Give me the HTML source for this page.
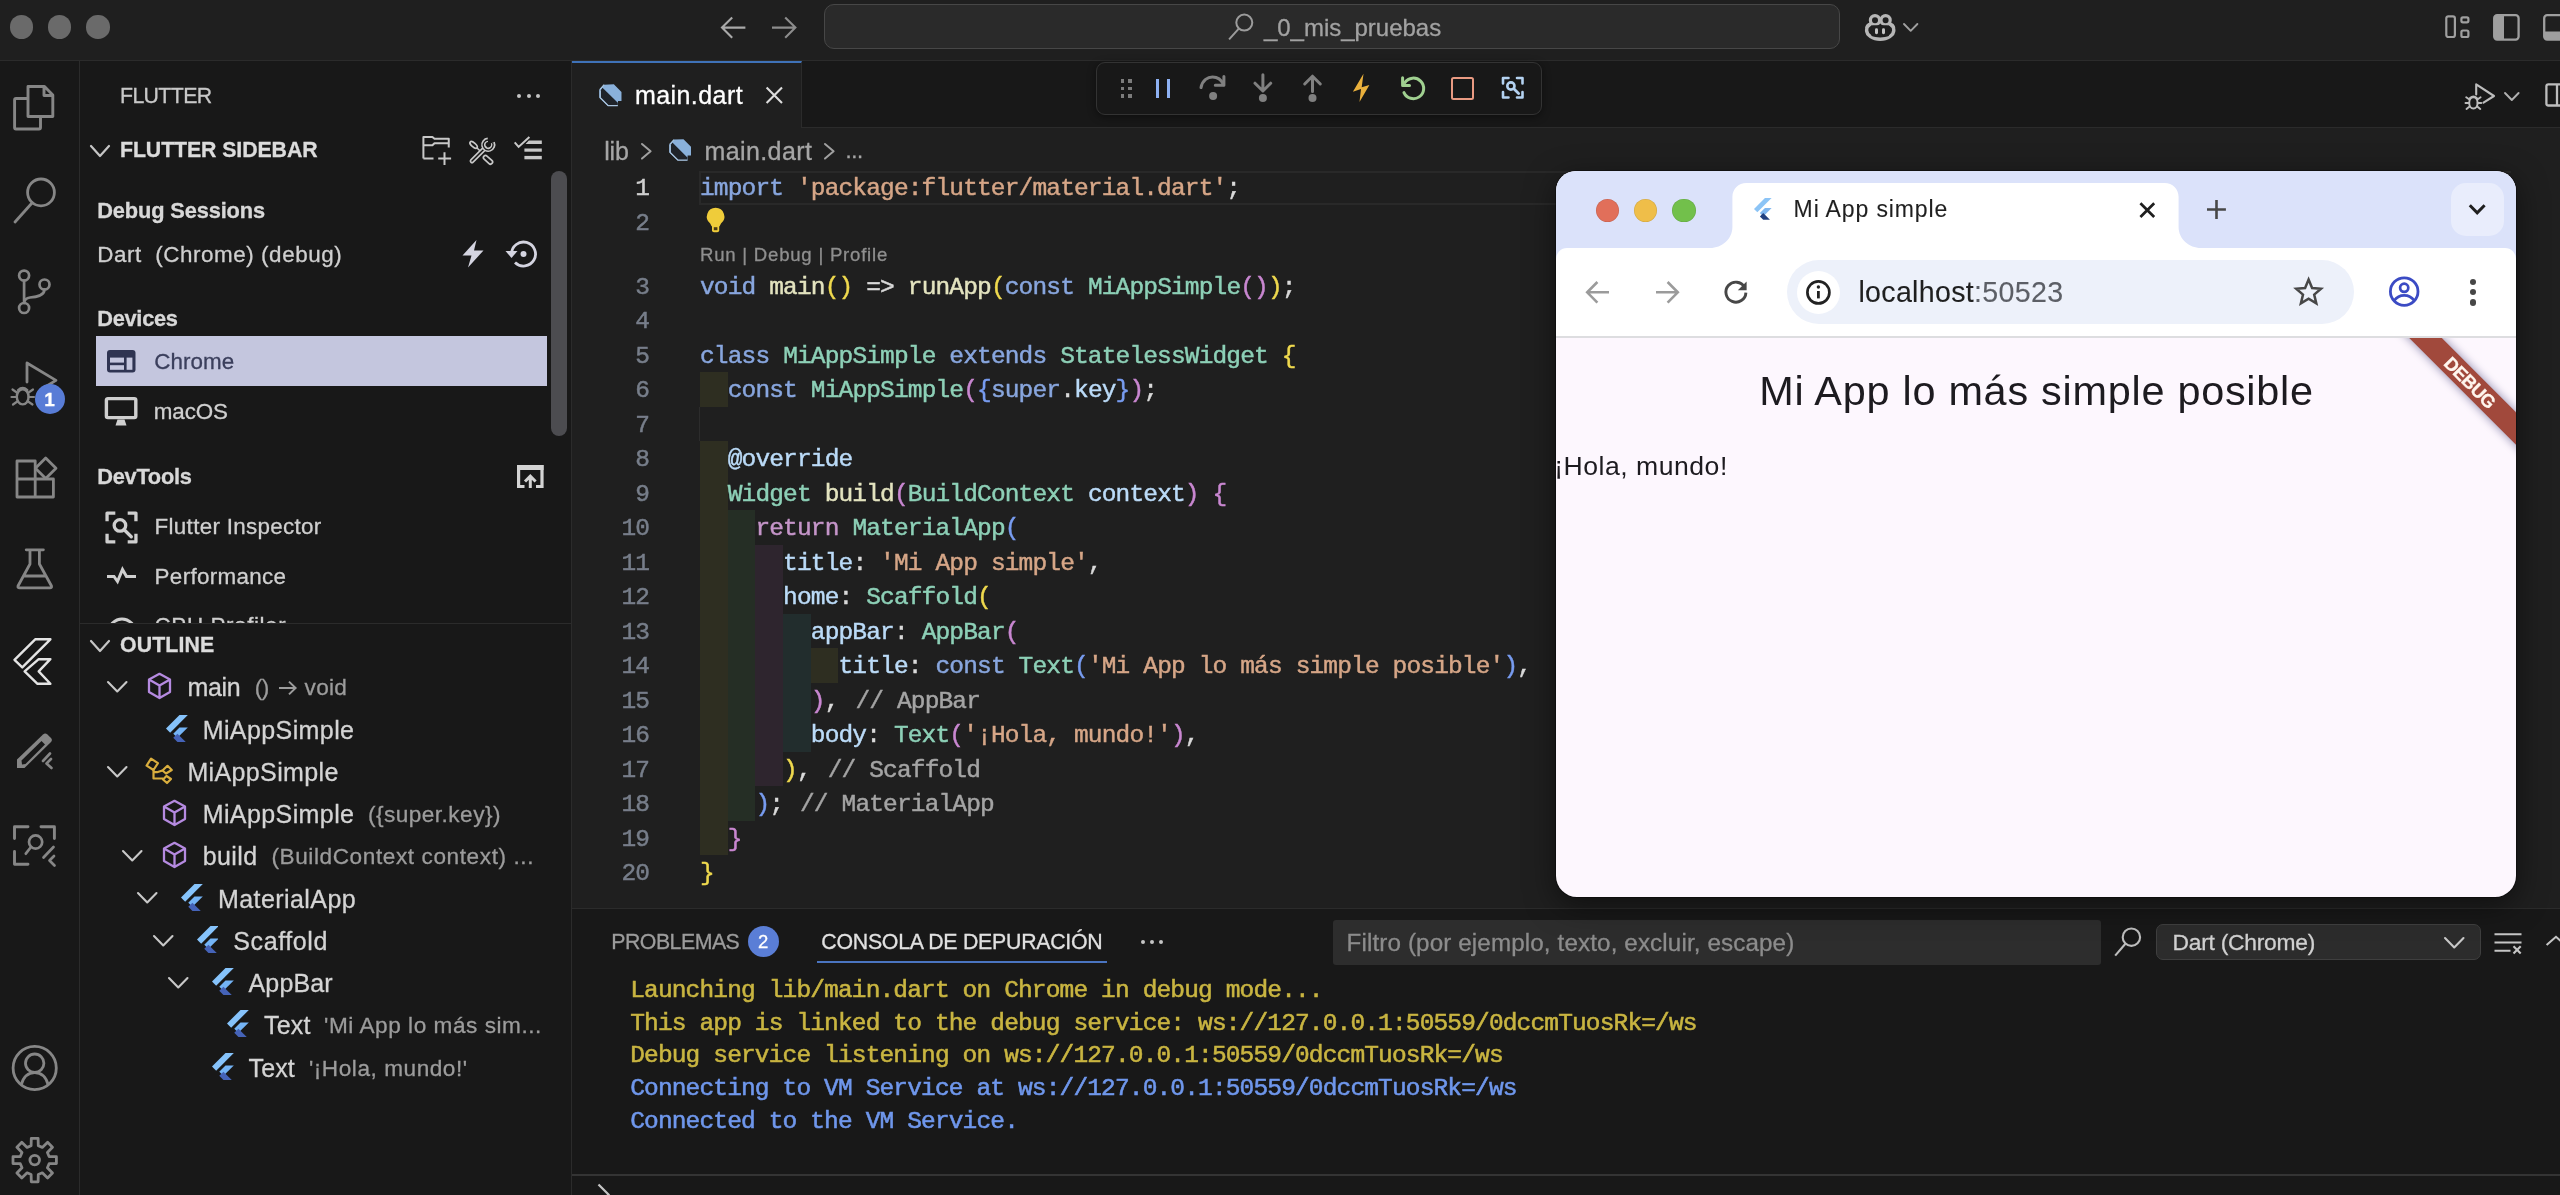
<!DOCTYPE html>
<html><head><meta charset="utf-8"><title>VS Code</title><style>
html,body{margin:0;padding:0;background:#181818;}
body{width:2560px;height:1195px;overflow:hidden;position:relative;font-family:"Liberation Sans",sans-serif;}
div,svg,span.t{position:absolute;box-sizing:border-box;}
span.t{white-space:pre;display:block;-webkit-text-stroke:0.3px;}

#root{position:absolute;left:0;top:0;width:2560px;height:1195px;overflow:hidden;will-change:transform;}
</style></head><body><div id="root">
<div style="left:0px;top:0px;width:2560px;height:61px;background:#1f1f1f;border-bottom:1px solid #2b2b2b;"></div>
<div style="left:0px;top:61px;width:80px;height:1134px;background:#181818;border-right:1px solid #2b2b2b;"></div>
<div style="left:80px;top:61px;width:492px;height:1134px;background:#181818;border-right:1px solid #2b2b2b;"></div>
<div style="left:572px;top:61px;width:1988px;height:848px;background:#1f1f1f;"></div>
<div style="left:572px;top:61px;width:1988px;height:67px;background:#181818;border-bottom:1px solid #2b2b2b;"></div>
<div style="left:572px;top:61px;width:230px;height:67px;background:#1f1f1f;border-top:2px solid #3f72b8;border-right:1px solid #2b2b2b;"></div>
<div style="left:572px;top:908px;width:1988px;height:287px;background:#181818;border-top:1px solid #2b2b2b;"></div>
<div style="left:572px;top:1174.3px;width:1988px;height:1.4px;background:#343434;"></div>
<div style="left:9.9px;top:15.4px;width:23.2px;height:23.2px;background:#6a6a6a;border-radius:50%;"></div>
<div style="left:47.9px;top:15.4px;width:23.2px;height:23.2px;background:#6a6a6a;border-radius:50%;"></div>
<div style="left:86.4px;top:15.4px;width:23.2px;height:23.2px;background:#6a6a6a;border-radius:50%;"></div>
<div style="left:824px;top:4.4px;width:1015.6px;height:45px;background:#2a2a2a;border:1.3px solid #474747;border-radius:10px;"></div>
<span class="t" id="t0" style="left:1263.9px;top:11.5px;line-height:31px;font-size:24px;color:#a2a2a2;letter-spacing:-0.011px;">_0_mis_pruebas</span>
<div style="left:699px;top:171px;width:1812px;height:34px;border:2px solid #292929;border-right:none;"></div>
<div style="left:700.0px;top:372.2px;width:27.7px;height:34.5px;background:rgba(255,255,64,0.07);"></div>
<div style="left:700.0px;top:441.2px;width:27.7px;height:34.5px;background:rgba(255,255,64,0.07);"></div>
<div style="left:700.0px;top:475.8px;width:27.7px;height:34.5px;background:rgba(255,255,64,0.07);"></div>
<div style="left:700.0px;top:510.2px;width:27.7px;height:34.5px;background:rgba(255,255,64,0.07);"></div>
<div style="left:727.7px;top:510.2px;width:27.7px;height:34.5px;background:rgba(127,255,127,0.07);"></div>
<div style="left:700.0px;top:544.8px;width:27.7px;height:34.5px;background:rgba(255,255,64,0.07);"></div>
<div style="left:727.7px;top:544.8px;width:27.7px;height:34.5px;background:rgba(127,255,127,0.07);"></div>
<div style="left:755.4px;top:544.8px;width:27.7px;height:34.5px;background:rgba(255,127,255,0.07);"></div>
<div style="left:700.0px;top:579.2px;width:27.7px;height:34.5px;background:rgba(255,255,64,0.07);"></div>
<div style="left:727.7px;top:579.2px;width:27.7px;height:34.5px;background:rgba(127,255,127,0.07);"></div>
<div style="left:755.4px;top:579.2px;width:27.7px;height:34.5px;background:rgba(255,127,255,0.07);"></div>
<div style="left:700.0px;top:613.8px;width:27.7px;height:34.5px;background:rgba(255,255,64,0.07);"></div>
<div style="left:727.7px;top:613.8px;width:27.7px;height:34.5px;background:rgba(127,255,127,0.07);"></div>
<div style="left:755.4px;top:613.8px;width:27.7px;height:34.5px;background:rgba(255,127,255,0.07);"></div>
<div style="left:783.1px;top:613.8px;width:27.7px;height:34.5px;background:rgba(79,236,236,0.07);"></div>
<div style="left:700.0px;top:648.2px;width:27.7px;height:34.5px;background:rgba(255,255,64,0.07);"></div>
<div style="left:727.7px;top:648.2px;width:27.7px;height:34.5px;background:rgba(127,255,127,0.07);"></div>
<div style="left:755.4px;top:648.2px;width:27.7px;height:34.5px;background:rgba(255,127,255,0.07);"></div>
<div style="left:783.1px;top:648.2px;width:27.7px;height:34.5px;background:rgba(79,236,236,0.07);"></div>
<div style="left:810.8px;top:648.2px;width:27.7px;height:34.5px;background:rgba(255,255,64,0.07);"></div>
<div style="left:700.0px;top:682.8px;width:27.7px;height:34.5px;background:rgba(255,255,64,0.07);"></div>
<div style="left:727.7px;top:682.8px;width:27.7px;height:34.5px;background:rgba(127,255,127,0.07);"></div>
<div style="left:755.4px;top:682.8px;width:27.7px;height:34.5px;background:rgba(255,127,255,0.07);"></div>
<div style="left:783.1px;top:682.8px;width:27.7px;height:34.5px;background:rgba(79,236,236,0.07);"></div>
<div style="left:700.0px;top:717.2px;width:27.7px;height:34.5px;background:rgba(255,255,64,0.07);"></div>
<div style="left:727.7px;top:717.2px;width:27.7px;height:34.5px;background:rgba(127,255,127,0.07);"></div>
<div style="left:755.4px;top:717.2px;width:27.7px;height:34.5px;background:rgba(255,127,255,0.07);"></div>
<div style="left:783.1px;top:717.2px;width:27.7px;height:34.5px;background:rgba(79,236,236,0.07);"></div>
<div style="left:700.0px;top:751.8px;width:27.7px;height:34.5px;background:rgba(255,255,64,0.07);"></div>
<div style="left:727.7px;top:751.8px;width:27.7px;height:34.5px;background:rgba(127,255,127,0.07);"></div>
<div style="left:755.4px;top:751.8px;width:27.7px;height:34.5px;background:rgba(255,127,255,0.07);"></div>
<div style="left:700.0px;top:786.2px;width:27.7px;height:34.5px;background:rgba(255,255,64,0.07);"></div>
<div style="left:727.7px;top:786.2px;width:27.7px;height:34.5px;background:rgba(127,255,127,0.07);"></div>
<div style="left:700.0px;top:820.8px;width:27.7px;height:34.5px;background:rgba(255,255,64,0.07);"></div>
<div style="left:699px;top:406.75px;width:1px;height:34.5px;background:#2c2c2c;"></div>
<span class="t" id="t1" style="right:1910.84755px;top:173.1px;line-height:32px;font-size:24.5px;color:#d0d0d0;font-family:'Liberation Mono', monospace;letter-spacing:-0.852px;-webkit-text-stroke:0.45px;">1</span>
<span class="t" id="t2" style="left:700px;top:173.1px;line-height:32px;font-size:24.5px;color:#dadada;font-family:'Liberation Mono', monospace;letter-spacing:-0.852px;-webkit-text-stroke:0.45px;"><span style="color:#88a6de">import</span><span style="color:#dadada"> </span><span style="color:#d6a687">&#x27;package:flutter/material.dart&#x27;</span><span style="color:#dadada">;</span></span>
<span class="t" id="t3" style="right:1910.84755px;top:207.6px;line-height:32px;font-size:24.5px;color:#777e8a;font-family:'Liberation Mono', monospace;letter-spacing:-0.852px;-webkit-text-stroke:0.45px;">2</span>
<span class="t" id="t4" style="right:1910.84755px;top:271.6px;line-height:32px;font-size:24.5px;color:#777e8a;font-family:'Liberation Mono', monospace;letter-spacing:-0.852px;-webkit-text-stroke:0.45px;">3</span>
<span class="t" id="t5" style="left:700px;top:271.6px;line-height:32px;font-size:24.5px;color:#dadada;font-family:'Liberation Mono', monospace;letter-spacing:-0.852px;-webkit-text-stroke:0.45px;"><span style="color:#88a6de">void</span><span style="color:#dadada"> </span><span style="color:#e3e3bf">main</span><span style="color:#efd94e">()</span><span style="color:#dadada"> =&gt; </span><span style="color:#e3e3bf">runApp</span><span style="color:#efd94e">(</span><span style="color:#88a6de">const</span><span style="color:#dadada"> </span><span style="color:#8dd0b7">MiAppSimple</span><span style="color:#c987d1">()</span><span style="color:#efd94e">)</span><span style="color:#dadada">;</span></span>
<span class="t" id="t6" style="right:1910.84755px;top:306.1px;line-height:32px;font-size:24.5px;color:#777e8a;font-family:'Liberation Mono', monospace;letter-spacing:-0.852px;-webkit-text-stroke:0.45px;">4</span>
<span class="t" id="t7" style="right:1910.84755px;top:340.6px;line-height:32px;font-size:24.5px;color:#777e8a;font-family:'Liberation Mono', monospace;letter-spacing:-0.852px;-webkit-text-stroke:0.45px;">5</span>
<span class="t" id="t8" style="left:700px;top:340.6px;line-height:32px;font-size:24.5px;color:#dadada;font-family:'Liberation Mono', monospace;letter-spacing:-0.852px;-webkit-text-stroke:0.45px;"><span style="color:#88a6de">class</span><span style="color:#dadada"> </span><span style="color:#8dd0b7">MiAppSimple</span><span style="color:#dadada"> </span><span style="color:#88a6de">extends</span><span style="color:#dadada"> </span><span style="color:#8dd0b7">StatelessWidget</span><span style="color:#dadada"> </span><span style="color:#efd94e">{</span></span>
<span class="t" id="t9" style="right:1910.84755px;top:375.1px;line-height:32px;font-size:24.5px;color:#777e8a;font-family:'Liberation Mono', monospace;letter-spacing:-0.852px;-webkit-text-stroke:0.45px;">6</span>
<span class="t" id="t10" style="left:700px;top:375.1px;line-height:32px;font-size:24.5px;color:#dadada;font-family:'Liberation Mono', monospace;letter-spacing:-0.852px;-webkit-text-stroke:0.45px;"><span style="color:#dadada">  </span><span style="color:#88a6de">const</span><span style="color:#dadada"> </span><span style="color:#8dd0b7">MiAppSimple</span><span style="color:#c987d1">(</span><span style="color:#789cf0">{</span><span style="color:#88a6de">super</span><span style="color:#dadada">.</span><span style="color:#bbdbf8">key</span><span style="color:#789cf0">}</span><span style="color:#c987d1">)</span><span style="color:#dadada">;</span></span>
<span class="t" id="t11" style="right:1910.84755px;top:409.6px;line-height:32px;font-size:24.5px;color:#777e8a;font-family:'Liberation Mono', monospace;letter-spacing:-0.852px;-webkit-text-stroke:0.45px;">7</span>
<span class="t" id="t12" style="right:1910.84755px;top:444.1px;line-height:32px;font-size:24.5px;color:#777e8a;font-family:'Liberation Mono', monospace;letter-spacing:-0.852px;-webkit-text-stroke:0.45px;">8</span>
<span class="t" id="t13" style="left:700px;top:444.1px;line-height:32px;font-size:24.5px;color:#dadada;font-family:'Liberation Mono', monospace;letter-spacing:-0.852px;-webkit-text-stroke:0.45px;"><span style="color:#dadada">  </span><span style="color:#bbdbf8">@override</span></span>
<span class="t" id="t14" style="right:1910.84755px;top:478.6px;line-height:32px;font-size:24.5px;color:#777e8a;font-family:'Liberation Mono', monospace;letter-spacing:-0.852px;-webkit-text-stroke:0.45px;">9</span>
<span class="t" id="t15" style="left:700px;top:478.6px;line-height:32px;font-size:24.5px;color:#dadada;font-family:'Liberation Mono', monospace;letter-spacing:-0.852px;-webkit-text-stroke:0.45px;"><span style="color:#dadada">  </span><span style="color:#8dd0b7">Widget</span><span style="color:#dadada"> </span><span style="color:#e3e3bf">build</span><span style="color:#c987d1">(</span><span style="color:#8dd0b7">BuildContext</span><span style="color:#dadada"> </span><span style="color:#bbdbf8">context</span><span style="color:#c987d1">)</span><span style="color:#dadada"> </span><span style="color:#c987d1">{</span></span>
<span class="t" id="t16" style="right:1910.84755px;top:513.1px;line-height:32px;font-size:24.5px;color:#777e8a;font-family:'Liberation Mono', monospace;letter-spacing:-0.852px;-webkit-text-stroke:0.45px;">10</span>
<span class="t" id="t17" style="left:700px;top:513.1px;line-height:32px;font-size:24.5px;color:#dadada;font-family:'Liberation Mono', monospace;letter-spacing:-0.852px;-webkit-text-stroke:0.45px;"><span style="color:#dadada">    </span><span style="color:#c595c9">return</span><span style="color:#dadada"> </span><span style="color:#8dd0b7">MaterialApp</span><span style="color:#789cf0">(</span></span>
<span class="t" id="t18" style="right:1910.84755px;top:547.6px;line-height:32px;font-size:24.5px;color:#777e8a;font-family:'Liberation Mono', monospace;letter-spacing:-0.852px;-webkit-text-stroke:0.45px;">11</span>
<span class="t" id="t19" style="left:700px;top:547.6px;line-height:32px;font-size:24.5px;color:#dadada;font-family:'Liberation Mono', monospace;letter-spacing:-0.852px;-webkit-text-stroke:0.45px;"><span style="color:#dadada">      </span><span style="color:#bbdbf8">title</span><span style="color:#dadada">: </span><span style="color:#d6a687">&#x27;Mi App simple&#x27;</span><span style="color:#dadada">,</span></span>
<span class="t" id="t20" style="right:1910.84755px;top:582.1px;line-height:32px;font-size:24.5px;color:#777e8a;font-family:'Liberation Mono', monospace;letter-spacing:-0.852px;-webkit-text-stroke:0.45px;">12</span>
<span class="t" id="t21" style="left:700px;top:582.1px;line-height:32px;font-size:24.5px;color:#dadada;font-family:'Liberation Mono', monospace;letter-spacing:-0.852px;-webkit-text-stroke:0.45px;"><span style="color:#dadada">      </span><span style="color:#bbdbf8">home</span><span style="color:#dadada">: </span><span style="color:#8dd0b7">Scaffold</span><span style="color:#efd94e">(</span></span>
<span class="t" id="t22" style="right:1910.84755px;top:616.6px;line-height:32px;font-size:24.5px;color:#777e8a;font-family:'Liberation Mono', monospace;letter-spacing:-0.852px;-webkit-text-stroke:0.45px;">13</span>
<span class="t" id="t23" style="left:700px;top:616.6px;line-height:32px;font-size:24.5px;color:#dadada;font-family:'Liberation Mono', monospace;letter-spacing:-0.852px;-webkit-text-stroke:0.45px;"><span style="color:#dadada">        </span><span style="color:#bbdbf8">appBar</span><span style="color:#dadada">: </span><span style="color:#8dd0b7">AppBar</span><span style="color:#c987d1">(</span></span>
<span class="t" id="t24" style="right:1910.84755px;top:651.1px;line-height:32px;font-size:24.5px;color:#777e8a;font-family:'Liberation Mono', monospace;letter-spacing:-0.852px;-webkit-text-stroke:0.45px;">14</span>
<span class="t" id="t25" style="left:700px;top:651.1px;line-height:32px;font-size:24.5px;color:#dadada;font-family:'Liberation Mono', monospace;letter-spacing:-0.852px;-webkit-text-stroke:0.45px;"><span style="color:#dadada">          </span><span style="color:#bbdbf8">title</span><span style="color:#dadada">: </span><span style="color:#88a6de">const</span><span style="color:#dadada"> </span><span style="color:#8dd0b7">Text</span><span style="color:#789cf0">(</span><span style="color:#d6a687">&#x27;Mi App lo más simple posible&#x27;</span><span style="color:#789cf0">)</span><span style="color:#dadada">,</span></span>
<span class="t" id="t26" style="right:1910.84755px;top:685.6px;line-height:32px;font-size:24.5px;color:#777e8a;font-family:'Liberation Mono', monospace;letter-spacing:-0.852px;-webkit-text-stroke:0.45px;">15</span>
<span class="t" id="t27" style="left:700px;top:685.6px;line-height:32px;font-size:24.5px;color:#dadada;font-family:'Liberation Mono', monospace;letter-spacing:-0.852px;-webkit-text-stroke:0.45px;"><span style="color:#dadada">        </span><span style="color:#c987d1">)</span><span style="color:#dadada">,</span><span style="color:#a4a4a4;margin-left:3px"> // AppBar</span></span>
<span class="t" id="t28" style="right:1910.84755px;top:720.1px;line-height:32px;font-size:24.5px;color:#777e8a;font-family:'Liberation Mono', monospace;letter-spacing:-0.852px;-webkit-text-stroke:0.45px;">16</span>
<span class="t" id="t29" style="left:700px;top:720.1px;line-height:32px;font-size:24.5px;color:#dadada;font-family:'Liberation Mono', monospace;letter-spacing:-0.852px;-webkit-text-stroke:0.45px;"><span style="color:#dadada">        </span><span style="color:#bbdbf8">body</span><span style="color:#dadada">: </span><span style="color:#8dd0b7">Text</span><span style="color:#c987d1">(</span><span style="color:#d6a687">&#x27;¡Hola, mundo!&#x27;</span><span style="color:#c987d1">)</span><span style="color:#dadada">,</span></span>
<span class="t" id="t30" style="right:1910.84755px;top:754.6px;line-height:32px;font-size:24.5px;color:#777e8a;font-family:'Liberation Mono', monospace;letter-spacing:-0.852px;-webkit-text-stroke:0.45px;">17</span>
<span class="t" id="t31" style="left:700px;top:754.6px;line-height:32px;font-size:24.5px;color:#dadada;font-family:'Liberation Mono', monospace;letter-spacing:-0.852px;-webkit-text-stroke:0.45px;"><span style="color:#dadada">      </span><span style="color:#efd94e">)</span><span style="color:#dadada">,</span><span style="color:#a4a4a4;margin-left:3px"> // Scaffold</span></span>
<span class="t" id="t32" style="right:1910.84755px;top:789.1px;line-height:32px;font-size:24.5px;color:#777e8a;font-family:'Liberation Mono', monospace;letter-spacing:-0.852px;-webkit-text-stroke:0.45px;">18</span>
<span class="t" id="t33" style="left:700px;top:789.1px;line-height:32px;font-size:24.5px;color:#dadada;font-family:'Liberation Mono', monospace;letter-spacing:-0.852px;-webkit-text-stroke:0.45px;"><span style="color:#dadada">    </span><span style="color:#789cf0">)</span><span style="color:#dadada">;</span><span style="color:#a4a4a4;margin-left:3px"> // MaterialApp</span></span>
<span class="t" id="t34" style="right:1910.84755px;top:823.6px;line-height:32px;font-size:24.5px;color:#777e8a;font-family:'Liberation Mono', monospace;letter-spacing:-0.852px;-webkit-text-stroke:0.45px;">19</span>
<span class="t" id="t35" style="left:700px;top:823.6px;line-height:32px;font-size:24.5px;color:#dadada;font-family:'Liberation Mono', monospace;letter-spacing:-0.852px;-webkit-text-stroke:0.45px;"><span style="color:#dadada">  </span><span style="color:#c987d1">}</span></span>
<span class="t" id="t36" style="right:1910.84755px;top:858.1px;line-height:32px;font-size:24.5px;color:#777e8a;font-family:'Liberation Mono', monospace;letter-spacing:-0.852px;-webkit-text-stroke:0.45px;">20</span>
<span class="t" id="t37" style="left:700px;top:858.1px;line-height:32px;font-size:24.5px;color:#dadada;font-family:'Liberation Mono', monospace;letter-spacing:-0.852px;-webkit-text-stroke:0.45px;"><span style="color:#efd94e">}</span></span>
<svg style="left:705px;top:206px;" width="22" height="28" viewBox="0 0 22 28" fill="none"><path d="M10.6 1.8 A8.8 8.8 0 0 0 5.2 17.5 L6.6 20.2 H14.6 L16 17.5 A8.8 8.8 0 0 0 10.6 1.8 Z" fill="#efcc3a"/><path d="M7 20 V24.2 Q7 26.3 9 26.3 H12.2 Q14.2 26.3 14.2 24.2 V20" fill="#efcc3a"/><rect x="8.8" y="21.2" width="3.6" height="3" fill="#4a3a14"/></svg>
<span class="t" id="t38" style="left:700px;top:242.8px;line-height:24px;font-size:18.6px;color:#8f8f8f;letter-spacing:0.765px;">Run | Debug | Profile</span>
<span class="t" id="t39" style="left:120px;top:81.5px;line-height:28px;font-size:21.3px;color:#c8c8c8;letter-spacing:-0.621px;">FLUTTER</span>
<div style="left:517px;top:93.5px;width:4px;height:4px;background:#c5c5c5;border-radius:50%;"></div>
<div style="left:526.5px;top:93.5px;width:4px;height:4px;background:#c5c5c5;border-radius:50%;"></div>
<div style="left:536px;top:93.5px;width:4px;height:4px;background:#c5c5c5;border-radius:50%;"></div>
<svg style="left:89.0px;top:144.0px;" width="22" height="14" viewBox="0 0 22 14" fill="none"><path d="M2 2 L11.0 12 L20 2" stroke="#c5c5c5" stroke-width="2.2" stroke-linecap="round" stroke-linejoin="round"/></svg>
<span class="t" id="t40" style="left:120px;top:136.0px;line-height:28px;font-size:21.3px;color:#dcdcdc;font-weight:700;letter-spacing:-0.084px;">FLUTTER SIDEBAR</span>
<svg style="left:421px;top:135px;" width="40" height="32" viewBox="0 0 40 32" fill="none"><path d="M2.4 23.5 V1.9 H11.4 L13.5 3.7 H27.75 V12.4 M2.4 10.3 H11.4 L13.5 8.2 H27.75 M2.4 23.5 H12.5" stroke="#c8c8c8" stroke-width="2" stroke-linejoin="round" stroke-linecap="butt"/><path d="M23.5 17.2 V30.1 M17.2 23.6 H30.1" stroke="#c8c8c8" stroke-width="2" stroke-linecap="butt"/></svg>
<svg style="left:467px;top:135.5px;" width="30" height="30" viewBox="0 0 30 30" fill="none"><g stroke-linecap="round" stroke-linejoin="round" fill="none"><ellipse cx="6.6" cy="8.9" rx="4.5" ry="2" transform="rotate(41 6.6 8.9)" stroke="#c8c8c8" stroke-width="1.7"/><path d="M10.3 12.2 L13.4 15.2" stroke="#c8c8c8" stroke-width="1.6"/><rect x="15.6" y="21.7" width="10.8" height="4.2" rx="2.1" transform="rotate(42 21 23.8)" stroke="#c8c8c8" stroke-width="1.7"/><path d="M17.8 12.2 L5 25" stroke="#c8c8c8" stroke-width="4.8"/><path d="M17.8 12.2 L5 25" stroke="#181818" stroke-width="1.5"/><path d="M25.83 6.59 A5 5 0 1 1 20.86 3.72" stroke="#c8c8c8" stroke-width="4.4" stroke-linecap="butt"/><path d="M25.6 6.8 A4.9 4.9 0 1 1 21 4" stroke="#181818" stroke-width="1.3" stroke-linecap="butt"/></g></svg>
<svg style="left:513px;top:135px;" width="32" height="28" viewBox="0 0 32 28" fill="none"><path d="M1.7 7.4 L5.6 11.9 L16.4 1.9" stroke="#c8c8c8" stroke-width="2" stroke-linecap="butt" stroke-linejoin="miter"/><path d="M15.8 5.5 H28.8 V9 H12.6 Z" fill="#c8c8c8"/><rect x="11.4" y="13.5" width="17.4" height="3.2" fill="#c8c8c8"/><rect x="11.4" y="20.9" width="17.4" height="3.4" fill="#c8c8c8"/></svg>
<div style="left:551px;top:170.5px;width:15.5px;height:265px;background:#4c4c50;border-radius:8px;"></div>
<span class="t" id="t41" style="left:97.2px;top:197.3px;line-height:28px;font-size:21.8px;color:#d8d8d8;font-weight:700;letter-spacing:-0.127px;">Debug Sessions</span>
<span class="t" id="t42" style="left:97.2px;top:239.8px;line-height:29px;font-size:22.4px;color:#cfcfcf;letter-spacing:0.560px;">Dart  (Chrome) (debug)</span>
<svg style="left:459px;top:238px;" width="28" height="32" viewBox="0 0 28 32" fill="none"><path d="M17.5 2 L3.5 17.5 H12.5 L9 29.5 L24.5 12.5 H15 Z" fill="#d4d4e0"/></svg>
<svg style="left:503px;top:238px;" width="36" height="32" viewBox="0 0 36 32" fill="none"><path d="M8.5 16 A12 12 0 1 1 12 24.5" stroke="#d4d4e0" stroke-width="2.8" stroke-linecap="butt"/><path d="M2.5 13 H14.5 L8.5 20 Z" fill="#d4d4e0"/><circle cx="20.5" cy="16" r="3" fill="#d4d4e0"/></svg>
<span class="t" id="t43" style="left:97.2px;top:305.0px;line-height:28px;font-size:21.8px;color:#d8d8d8;font-weight:700;letter-spacing:-0.275px;">Devices</span>
<div style="left:96px;top:336.3px;width:451.2px;height:49.8px;background:#c4c6de;"></div>
<svg style="left:106px;top:349px;" width="31" height="25" viewBox="0 0 31 25" fill="none"><rect x="1" y="1" width="28.5" height="22.6" rx="3" fill="#2f3452"/><rect x="4" y="8.6" width="14" height="5" fill="#c4c6de"/><rect x="4" y="16.2" width="14" height="4.6" fill="#c4c6de"/><rect x="20.6" y="8.6" width="5.8" height="12.2" fill="#c4c6de"/></svg>
<span class="t" id="t44" style="left:154.2px;top:346.5px;line-height:29px;font-size:22.4px;color:#3b3f5c;letter-spacing:0.060px;">Chrome</span>
<svg style="left:104px;top:396px;" width="35" height="31" viewBox="0 0 35 31" fill="none"><rect x="2.4" y="2.6" width="29.4" height="19" rx="1.5" stroke="#cfcfcf" stroke-width="3.4"/><path d="M13.5 23.5 H20.5 L22.5 29.5 H11.5 Z" fill="#cfcfcf"/></svg>
<span class="t" id="t45" style="left:153.8px;top:397.0px;line-height:29px;font-size:22.4px;color:#cfcfcf;letter-spacing:-0.131px;">macOS</span>
<span class="t" id="t46" style="left:97.2px;top:462.5px;line-height:28px;font-size:21.8px;color:#d8d8d8;font-weight:700;letter-spacing:-0.250px;">DevTools</span>
<svg style="left:516px;top:464px;" width="29" height="26" viewBox="0 0 29 26" fill="none"><path d="M8.5 22.5 H2.6 V2.6 H26 V22.5 H20" stroke="#d4d4d4" stroke-width="3.2" stroke-linejoin="miter"/><path d="M1 3.5 H27.5" stroke="#d4d4d4" stroke-width="5"/><path d="M14.3 24 V13 M9 17.5 L14.3 12.2 L19.6 17.5" stroke="#d4d4d4" stroke-width="3"/></svg>
<svg style="left:105px;top:510.5px;" width="33" height="33" viewBox="0 0 32 32" fill="none"><g stroke="#cfcfcf" stroke-width="3.20" stroke-linejoin="round"><path d="M2 10 V2 H10 M22 2 H30 V10 M30 22 V30 H22 M10 30 H2 V22"/><circle cx="14.5" cy="14" r="5.6"/><path d="M18.6 18.2 L25.5 25" stroke-linecap="round"/></g></svg>
<span class="t" id="t47" style="left:154.6px;top:511.8px;line-height:29px;font-size:22.4px;color:#cfcfcf;letter-spacing:0.307px;">Flutter Inspector</span>
<svg style="left:105px;top:565px;" width="33" height="22" viewBox="0 0 33 22" fill="none"><path d="M2 11.5 H9 L12.5 16.5 L17.5 4.5 L21.5 11.5 H31" stroke="#cfcfcf" stroke-width="3" stroke-linejoin="miter"/></svg>
<span class="t" id="t48" style="left:154.6px;top:562.0px;line-height:29px;font-size:22.4px;color:#cfcfcf;letter-spacing:0.328px;">Performance</span>
<div style="left:96px;top:600px;width:452px;height:23px;overflow:hidden;"><svg style="left:10px;top:16px" width="32" height="32" viewBox="0 0 32 32" fill="none"><circle cx="16" cy="16" r="13" stroke="#cfcfcf" stroke-width="3"/></svg><span class="t" style="left:58.6px;top:12px;font-size:22.4px;line-height:28px;color:#cfcfcf;letter-spacing:0.6px">CPU Profiler</span></div>
<div style="left:80px;top:622.5px;width:491px;height:1px;background:#2b2b2b;"></div>
<svg style="left:89.0px;top:639.0px;" width="22" height="14" viewBox="0 0 22 14" fill="none"><path d="M2 2 L11.0 12 L20 2" stroke="#c5c5c5" stroke-width="2.2" stroke-linecap="round" stroke-linejoin="round"/></svg>
<span class="t" id="t49" style="left:120px;top:631.0px;line-height:28px;font-size:21.3px;color:#dcdcdc;font-weight:700;letter-spacing:0.133px;">OUTLINE</span>
<svg style="left:105.75px;top:680.15px;" width="22.5" height="13.5" viewBox="0 0 22.5 13.5" fill="none"><path d="M2 2 L11.25 11.5 L20.5 2" stroke="#c8c8c8" stroke-width="2.1" stroke-linecap="round" stroke-linejoin="round"/></svg>
<svg style="left:146.9px;top:671.9px;" width="25" height="28" viewBox="0 0 25 28" fill="none"><path d="M12.5 1.8 L23 7.6 V20 L12.5 26 L2 20 V7.6 Z M2 7.6 L12.5 13.6 L23 7.6 M12.5 13.6 V26" stroke="#b58ae0" stroke-width="2.3" stroke-linejoin="round"/></svg>
<span class="t" id="t50" style="left:187.4px;top:671.3px;line-height:32px;font-size:25px;color:#d4d4d4;letter-spacing:-0.272px;">main</span>
<span class="t" id="t51" style="left:254.8px;top:673.4px;line-height:29px;font-size:22.6px;color:#9c9c9c;letter-spacing:-0.681px;">()</span>
<svg style="left:276.5px;top:679.9px;" width="22" height="16" viewBox="0 0 22 16" fill="none"><path d="M2 8 H18.6 M12 1.6 L18.6 8 L12 14.4" stroke="#9c9c9c" stroke-width="2"/></svg>
<span class="t" id="t52" style="left:304.6px;top:673.4px;line-height:29px;font-size:22.6px;color:#9c9c9c;letter-spacing:0.287px;">void</span>
<svg style="left:165.90000000000003px;top:714.65px;" width="21.8" height="27.0" viewBox="0 0 100 123.8" fill="none"><path d="M19 81 L0 62 L62 0 H100 Z" fill="#86c3fb"/><path d="M100 57 H62 L33.4 85.6 L52.4 104.7 Z" fill="#74b4f6"/><path d="M52.4 123.8 H90.6 L52.4 85.6 L33.4 104.7 Z" fill="#4563b8"/></svg>
<span class="t" id="t53" style="left:202.70000000000002px;top:713.5px;line-height:32px;font-size:25px;color:#d4d4d4;letter-spacing:0.402px;">MiAppSimple</span>
<svg style="left:105.75px;top:764.65px;" width="22.5" height="13.5" viewBox="0 0 22.5 13.5" fill="none"><path d="M2 2 L11.25 11.5 L20.5 2" stroke="#c8c8c8" stroke-width="2.1" stroke-linecap="round" stroke-linejoin="round"/></svg>
<svg style="left:145.4px;top:756.9px;" width="29" height="28" viewBox="0 0 29 28" fill="none"><g stroke="#d9ae3e" stroke-width="2.2" stroke-linejoin="round"><path d="M7.2 1.6 L13 7.4 L7.2 13.2 L1.4 7.4 Z" transform="rotate(-12 7 7)"/><path d="M8.5 13 V21.5 H18 M8.5 15.2 H12 L17.5 13.5"/><path d="M22.5 8.8 L26.8 13 L21 16.5 L17.5 13.5 Z"/><path d="M21.5 19 L26 22 L22 26 L18 22.5 Z"/></g></svg>
<span class="t" id="t54" style="left:187.4px;top:755.8px;line-height:32px;font-size:25px;color:#d4d4d4;letter-spacing:0.374px;">MiAppSimple</span>
<svg style="left:162.20000000000002px;top:798.65px;" width="25" height="28" viewBox="0 0 25 28" fill="none"><path d="M12.5 1.8 L23 7.6 V20 L12.5 26 L2 20 V7.6 Z M2 7.6 L12.5 13.6 L23 7.6 M12.5 13.6 V26" stroke="#b58ae0" stroke-width="2.3" stroke-linejoin="round"/></svg>
<span class="t" id="t55" style="left:202.70000000000002px;top:798.0px;line-height:32px;font-size:25px;color:#d4d4d4;letter-spacing:0.402px;">MiAppSimple</span>
<span class="t" id="t56" style="left:368px;top:800.1px;line-height:29px;font-size:22.6px;color:#9c9c9c;letter-spacing:0.465px;">({super.key})</span>
<svg style="left:121.05000000000001px;top:849.15px;" width="22.5" height="13.5" viewBox="0 0 22.5 13.5" fill="none"><path d="M2 2 L11.25 11.5 L20.5 2" stroke="#c8c8c8" stroke-width="2.1" stroke-linecap="round" stroke-linejoin="round"/></svg>
<svg style="left:162.20000000000002px;top:840.9px;" width="25" height="28" viewBox="0 0 25 28" fill="none"><path d="M12.5 1.8 L23 7.6 V20 L12.5 26 L2 20 V7.6 Z M2 7.6 L12.5 13.6 L23 7.6 M12.5 13.6 V26" stroke="#b58ae0" stroke-width="2.3" stroke-linejoin="round"/></svg>
<span class="t" id="t57" style="left:202.70000000000002px;top:840.3px;line-height:32px;font-size:25px;color:#d4d4d4;letter-spacing:0.434px;">build</span>
<span class="t" id="t58" style="left:271.4px;top:842.4px;line-height:29px;font-size:22.6px;color:#9c9c9c;letter-spacing:0.589px;">(BuildContext context) ...</span>
<svg style="left:136.35px;top:891.4px;" width="22.5" height="13.5" viewBox="0 0 22.5 13.5" fill="none"><path d="M2 2 L11.25 11.5 L20.5 2" stroke="#c8c8c8" stroke-width="2.1" stroke-linecap="round" stroke-linejoin="round"/></svg>
<svg style="left:181.2px;top:883.65px;" width="21.8" height="27.0" viewBox="0 0 100 123.8" fill="none"><path d="M19 81 L0 62 L62 0 H100 Z" fill="#86c3fb"/><path d="M100 57 H62 L33.4 85.6 L52.4 104.7 Z" fill="#74b4f6"/><path d="M52.4 123.8 H90.6 L52.4 85.6 L33.4 104.7 Z" fill="#4563b8"/></svg>
<span class="t" id="t59" style="left:218.0px;top:882.5px;line-height:32px;font-size:25px;color:#d4d4d4;letter-spacing:0.427px;">MaterialApp</span>
<svg style="left:151.65px;top:933.65px;" width="22.5" height="13.5" viewBox="0 0 22.5 13.5" fill="none"><path d="M2 2 L11.25 11.5 L20.5 2" stroke="#c8c8c8" stroke-width="2.1" stroke-linecap="round" stroke-linejoin="round"/></svg>
<svg style="left:196.5px;top:925.9px;" width="21.8" height="27.0" viewBox="0 0 100 123.8" fill="none"><path d="M19 81 L0 62 L62 0 H100 Z" fill="#86c3fb"/><path d="M100 57 H62 L33.4 85.6 L52.4 104.7 Z" fill="#74b4f6"/><path d="M52.4 123.8 H90.6 L52.4 85.6 L33.4 104.7 Z" fill="#4563b8"/></svg>
<span class="t" id="t60" style="left:233.3px;top:924.8px;line-height:32px;font-size:25px;color:#d4d4d4;letter-spacing:0.601px;">Scaffold</span>
<svg style="left:166.95px;top:975.9px;" width="22.5" height="13.5" viewBox="0 0 22.5 13.5" fill="none"><path d="M2 2 L11.25 11.5 L20.5 2" stroke="#c8c8c8" stroke-width="2.1" stroke-linecap="round" stroke-linejoin="round"/></svg>
<svg style="left:211.8px;top:968.15px;" width="21.8" height="27.0" viewBox="0 0 100 123.8" fill="none"><path d="M19 81 L0 62 L62 0 H100 Z" fill="#86c3fb"/><path d="M100 57 H62 L33.4 85.6 L52.4 104.7 Z" fill="#74b4f6"/><path d="M52.4 123.8 H90.6 L52.4 85.6 L33.4 104.7 Z" fill="#4563b8"/></svg>
<span class="t" id="t61" style="left:248.60000000000002px;top:967.0px;line-height:32px;font-size:25px;color:#d4d4d4;letter-spacing:0.102px;">AppBar</span>
<svg style="left:227.09999999999997px;top:1010.4000000000001px;" width="21.8" height="27.0" viewBox="0 0 100 123.8" fill="none"><path d="M19 81 L0 62 L62 0 H100 Z" fill="#86c3fb"/><path d="M100 57 H62 L33.4 85.6 L52.4 104.7 Z" fill="#74b4f6"/><path d="M52.4 123.8 H90.6 L52.4 85.6 L33.4 104.7 Z" fill="#4563b8"/></svg>
<span class="t" id="t62" style="left:263.9px;top:1009.3px;line-height:32px;font-size:25px;color:#d4d4d4;letter-spacing:0.235px;">Text</span>
<span class="t" id="t63" style="left:324.1px;top:1011.4px;line-height:29px;font-size:22.6px;color:#9c9c9c;letter-spacing:0.540px;">&#x27;Mi App lo más sim...</span>
<svg style="left:211.8px;top:1052.65px;" width="21.8" height="27.0" viewBox="0 0 100 123.8" fill="none"><path d="M19 81 L0 62 L62 0 H100 Z" fill="#86c3fb"/><path d="M100 57 H62 L33.4 85.6 L52.4 104.7 Z" fill="#74b4f6"/><path d="M52.4 123.8 H90.6 L52.4 85.6 L33.4 104.7 Z" fill="#4563b8"/></svg>
<span class="t" id="t64" style="left:248.60000000000002px;top:1051.6px;line-height:32px;font-size:25px;color:#d4d4d4;letter-spacing:0.110px;">Text</span>
<span class="t" id="t65" style="left:308.9px;top:1053.7px;line-height:29px;font-size:22.6px;color:#9c9c9c;letter-spacing:0.550px;">&#x27;¡Hola, mundo!&#x27;</span>
<svg style="left:10px;top:80px;" width="50" height="55" viewBox="0 0 50 55" fill="none"><path d="M18 6.5 H34.5 L42.8 15 V36.5 H18 Z M34 7 V15.5 H42.5" stroke="#868686" stroke-width="2.9" stroke-linejoin="round" stroke-linecap="round" /><path d="M17.5 18.5 H6 Q4.6 18.5 4.6 20 V47.5 Q4.6 49 6 49 H29 Q30.5 49 30.5 47.5 V37" stroke="#868686" stroke-width="2.9" stroke-linejoin="round" stroke-linecap="round" /></svg>
<svg style="left:10px;top:175px;" width="50" height="52" viewBox="0 0 50 52" fill="none"><circle cx="31" cy="17.4" r="13.4" stroke="#868686" stroke-width="2.8"/><path d="M22.2 27.8 L5 47" stroke="#868686" stroke-width="2.8" stroke-linejoin="round" stroke-linecap="round" /></svg>
<svg style="left:10px;top:265px;" width="50" height="55" viewBox="0 0 50 55" fill="none"><circle cx="14.1" cy="10.6" r="5" stroke="#868686" stroke-width="2.7"/><circle cx="14.1" cy="43" r="5" stroke="#868686" stroke-width="2.7"/><circle cx="34.5" cy="19.5" r="5" stroke="#868686" stroke-width="2.7"/><path d="M14.1 15.5 V38 M34.5 24.3 C34.5 31 26 32 20 32.5 C16 33 14.5 35 14.2 38" stroke="#868686" stroke-width="2.7" stroke-linejoin="round" stroke-linecap="round" /></svg>
<svg style="left:5px;top:355px;" width="60" height="60" viewBox="0 0 60 60" fill="none"><path d="M22 27 V8 L51 25.4 L40 32" stroke="#868686" stroke-width="2.8" stroke-linejoin="round" stroke-linecap="round" /><ellipse cx="17.7" cy="41.8" rx="5.9" ry="7.6" stroke="#868686" stroke-width="2.4"/><path d="M13 35 Q17.7 31 22.4 35 M12 42 H6.5 M11.8 37.5 L7.5 34.5 M12.3 46.5 L8 49.5 M23.4 42 H29 M23.6 37.5 L28 34.5 M23.1 46.5 L27.5 49.5" stroke="#868686" stroke-width="2.2" stroke-linejoin="round" stroke-linecap="round" /></svg>
<div style="left:34.7px;top:383.9px;width:30.4px;height:30.4px;background:#587cd6;border-radius:50%;"></div>
<span class="t" id="t66" style="left:44.2px;top:386.8px;line-height:25px;font-size:19px;color:#ffffff;font-weight:700;">1</span>
<svg style="left:10px;top:452px;" width="52" height="50" viewBox="0 0 52 50" fill="none"><path d="M7 9 H25.2 V27 H7 Z M7 27 V45 H25.2 V27 M25.2 45 H43.4 V27 H25.2" stroke="#868686" stroke-width="2.8" stroke-linejoin="round" stroke-linecap="round" stroke-linejoin="miter"/><path d="M35.7 6 L46 16.3 L35.7 26.6 L25.4 16.3 Z" stroke="#868686" stroke-width="2.8" stroke-linejoin="round" stroke-linecap="round" /></svg>
<svg style="left:10px;top:540px;" width="52" height="55" viewBox="0 0 52 55" fill="none"><path d="M16.2 9.8 H33.4 M20 9.8 V24 L8 46 Q7.5 47.8 9.5 47.8 H40 Q42 47.8 41.5 46 L29.4 24 V9.8 M13.5 36 H36" stroke="#868686" stroke-width="2.8" stroke-linejoin="round" stroke-linecap="round" /></svg>
<svg style="left:10px;top:632px;" width="50" height="58" viewBox="0 0 50 58" fill="none"><path d="M25.2 7.3 H40.4 L12.3 35.4 L4.5 27.9 Z M40.4 27.2 H28.7 L14.6 39.4 L27.5 51.8 H40.4 L28.7 39.4 Z" stroke="#e4e4e4" stroke-width="2.4" stroke-linejoin="round" stroke-linecap="round" stroke-linejoin="miter"/></svg>
<svg style="left:10px;top:728px;" width="52" height="52" viewBox="0 0 52 52" fill="none"><path d="M7 40 L7 31.5 L33 6.5 Q35.2 4.6 37.4 6.5 L41 10 Q42.8 12 41 14 L14.5 40 Z" fill="#868686"/><path d="M12 36.5 L11.5 32.5 L31.5 13 L35 16.5 L15.5 36 Z" fill="#181818"/><path d="M33 33 L40 25.5 M41 31 L36.5 35.5 L41.5 40" stroke="#868686" stroke-width="2.6" stroke-linejoin="round" stroke-linecap="round" stroke-linecap="butt" stroke-linejoin="miter"/></svg>
<svg style="left:10px;top:820px;" width="52" height="52" viewBox="0 0 52 52" fill="none"><path d="M4.5 18.5 V6.8 H18 M31 6.8 H44.4 V18.5 M4.5 31.5 V44.3 H18" stroke="#868686" stroke-width="2.9" stroke-linejoin="round" stroke-linecap="round" stroke-linecap="butt" stroke-linejoin="miter"/><circle cx="25.6" cy="22" r="6.6" stroke="#868686" stroke-width="2.7"/><path d="M21 27 L15.8 33.7" stroke="#868686" stroke-width="2.7" stroke-linejoin="round" stroke-linecap="round" /><path d="M33.5 37.5 L43.5 27 M44 36 L39.5 40.5 L44.5 45.5" stroke="#868686" stroke-width="2.7" stroke-linejoin="round" stroke-linecap="round" stroke-linecap="butt" stroke-linejoin="miter"/></svg>
<svg style="left:10px;top:1043px;" width="50" height="50" viewBox="0 0 50 50" fill="none"><circle cx="24.7" cy="25" r="21.6" stroke="#868686" stroke-width="2.8"/><circle cx="24.7" cy="20.2" r="9.2" stroke="#868686" stroke-width="2.8"/><path d="M11.3 41.5 C14 32 20 29.6 24.7 29.6 C29.4 29.6 35.4 32 38.1 41.5" stroke="#868686" stroke-width="2.8" stroke-linejoin="round" stroke-linecap="round" /></svg>
<svg style="left:10px;top:1135px;" width="50" height="50" viewBox="0 0 50 50" fill="none"><path d="M21.1 10.7 L21.3 3.4 L28.1 3.4 L28.3 10.7 L32.3 12.4 L37.6 7.3 L42.5 12.2 L37.4 17.5 L39.1 21.5 L46.4 21.7 L46.4 28.5 L39.1 28.7 L37.4 32.7 L42.5 38.0 L37.6 42.9 L32.3 37.8 L28.3 39.5 L28.1 46.8 L21.3 46.8 L21.1 39.5 L17.1 37.8 L11.8 42.9 L6.9 38.0 L12.0 32.7 L10.3 28.7 L3.0 28.5 L3.0 21.7 L10.3 21.5 L12.0 17.5 L6.9 12.2 L11.8 7.3 L17.1 12.4 Z" stroke="#868686" stroke-width="2.8" stroke-linejoin="round" stroke-linecap="round" stroke-linejoin="miter"/><circle cx="24.7" cy="25.1" r="4.8" stroke="#868686" stroke-width="2.8"/></svg>
<svg style="left:720.3px;top:16.2px;" width="28" height="24" viewBox="0 0 28 24" fill="none"><path d="M2 11.6 H25.4 M12.2 1.5 L2 11.6 L12.2 21.8" stroke="#a9a9a9" stroke-width="2.1" stroke-linejoin="miter"/></svg>
<svg style="left:770px;top:16.2px;" width="28" height="24" viewBox="0 0 28 24" fill="none"><path d="M2 11.6 H25.4 M15.2 1.5 L25.4 11.6 L15.2 21.8" stroke="#8d8d8d" stroke-width="2.1" stroke-linejoin="miter"/></svg>
<svg style="left:1226px;top:11px;" width="30" height="30" viewBox="0 0 30 30" fill="none"><circle cx="18.3" cy="11.6" r="8" stroke="#9c9c9c" stroke-width="2"/><path d="M12.8 17.6 L3.1 28.3" stroke="#9c9c9c" stroke-width="2"/></svg>
<svg style="left:1862px;top:11px;" width="36" height="32" viewBox="0 0 36 32" fill="none"><g stroke="#b6b6b6"><ellipse cx="18.2" cy="19.3" rx="13.6" ry="9" stroke-width="3.4"/><circle cx="13" cy="9.2" r="4.6" stroke-width="3.2" fill="#1f1f1f"/><circle cx="23.6" cy="9.2" r="4.6" stroke-width="3.2" fill="#1f1f1f"/></g><rect x="9.2" y="14.2" width="18" height="11.4" rx="2" fill="#1f1f1f"/><rect x="13" y="17.2" width="3" height="6" rx="1.4" fill="#c4c4c4"/><rect x="20" y="17.2" width="3" height="6" rx="1.4" fill="#c4c4c4"/><path d="M4.5 17 Q5.2 13.5 9 13 M31.9 17 Q31.2 13.5 27.4 13" stroke="#b6b6b6" stroke-width="3"/></svg>
<svg style="left:1901.8999999999999px;top:22.200000000000003px;" width="17.4" height="10.8" viewBox="0 0 17.4 10.8" fill="none"><path d="M2 2 L8.7 8.8 L15.4 2" stroke="#a0a0a0" stroke-width="1.9" stroke-linecap="round" stroke-linejoin="round"/></svg>
<svg style="left:2443px;top:13px;" width="30" height="28" viewBox="0 0 30 28" fill="none"><rect x="3.3" y="3.3" width="8.6" height="20.7" rx="2" stroke="#9f9f9f" stroke-width="2.2"/><rect x="18.4" y="4.4" width="7" height="4.9" rx="1.5" stroke="#9f9f9f" stroke-width="2.2"/><rect x="18.4" y="17.5" width="7" height="6.5" rx="1.5" stroke="#9f9f9f" stroke-width="2.2"/></svg>
<svg style="left:2491px;top:11.5px;" width="32" height="31" viewBox="0 0 32 31" fill="none"><rect x="3.2" y="3.2" width="24.4" height="24.4" rx="3" stroke="#9f9f9f" stroke-width="2.3"/><path d="M3.2 5.5 Q3.2 3.2 5.5 3.2 H13 V27.6 H5.5 Q3.2 27.6 3.2 25.3 Z" fill="#9f9f9f"/></svg>
<svg style="left:2541px;top:11.5px;" width="32" height="31" viewBox="0 0 32 31" fill="none"><rect x="3.2" y="3.2" width="24.4" height="24.4" rx="3" stroke="#9f9f9f" stroke-width="2.3"/><path d="M3.2 19.5 H27.6 V25.3 Q27.6 27.6 25.3 27.6 H5.5 Q3.2 27.6 3.2 25.3 Z" fill="#9f9f9f"/></svg>
<svg style="left:598px;top:82.5px;" width="24.5" height="24.5" viewBox="0 0 24 24" fill="none"><path d="M6 1.6 L15.5 1.2 L23 8.8 V17.6 L19.6 17.6 L19.6 22.6 H9.6 L1.2 14.2 V6.6 Z" fill="#8ab1db"/><path d="M4.4 4.6 L19.4 19.4 V22.4 L10.4 22.4 L2.6 14.4 L2.6 7 Z" fill="#1f2329"/><path d="M2.2 7 L2.2 14.4 L10 22.2 H19.4" stroke="#a9c4de" stroke-width="1.3" fill="none"/><path d="M6 1.6 L1.8 6.4" stroke="#a9c4de" stroke-width="1.2"/></svg>
<span class="t" id="t67" style="left:635px;top:79.3px;line-height:32px;font-size:25px;color:#ffffff;letter-spacing:0.420px;">main.dart</span>
<svg style="left:763.5px;top:85px;" width="20" height="20" viewBox="0 0 20 20" fill="none"><path d="M2.6 2.6 L18 18 M18 2.6 L2.6 18" stroke="#dddddd" stroke-width="2.1"/></svg>
<span class="t" id="t68" style="left:604.2px;top:134.6px;line-height:32px;font-size:25px;color:#a6a6a6;letter-spacing:-0.205px;">lib</span>
<svg style="left:640.4000000000001px;top:142.0px;" width="12.6" height="18.6" viewBox="0 0 12.6 18.6" fill="none"><path d="M2 2 L10.6 9.3 L2 16.6" stroke="#a0a0a0" stroke-width="2" stroke-linecap="round" stroke-linejoin="round"/></svg>
<svg style="left:667.8px;top:137.5px;" width="24" height="24" viewBox="0 0 24 24" fill="none"><path d="M6 1.6 L15.5 1.2 L23 8.8 V17.6 L19.6 17.6 L19.6 22.6 H9.6 L1.2 14.2 V6.6 Z" fill="#8ab1db"/><path d="M4.4 4.6 L19.4 19.4 V22.4 L10.4 22.4 L2.6 14.4 L2.6 7 Z" fill="#1f2329"/><path d="M2.2 7 L2.2 14.4 L10 22.2 H19.4" stroke="#a9c4de" stroke-width="1.3" fill="none"/><path d="M6 1.6 L1.8 6.4" stroke="#a9c4de" stroke-width="1.2"/></svg>
<span class="t" id="t69" style="left:704.4px;top:134.6px;line-height:32px;font-size:25px;color:#a6a6a6;letter-spacing:0.420px;">main.dart</span>
<svg style="left:823.2px;top:142.0px;" width="12.6" height="18.6" viewBox="0 0 12.6 18.6" fill="none"><path d="M2 2 L10.6 9.3 L2 16.6" stroke="#a0a0a0" stroke-width="2" stroke-linecap="round" stroke-linejoin="round"/></svg>
<span class="t" id="t70" style="left:845.4px;top:136.1px;line-height:29px;font-size:22px;color:#a6a6a6;letter-spacing:-0.281px;">...</span>
<svg style="left:2462px;top:80px;" width="36" height="34" viewBox="0 0 36 34" fill="none"><path d="M14.2 14.5 V4.3 L32 16 L21.5 22.6" stroke="#bdbdbd" stroke-width="2.1" stroke-linejoin="round" stroke-linecap="round" stroke-linejoin="miter"/><ellipse cx="11.4" cy="22.9" rx="4.2" ry="5.6" stroke="#bdbdbd" stroke-width="2"/><path d="M8 18 Q11.4 15 14.8 18 M7.2 23 H3.5 M7.4 19.5 L4.2 17.3 M7.6 26.4 L4.5 29 M15.6 23 H19.3 M15.4 19.5 L18.6 17.3 M15.2 26.4 L18.3 29" stroke="#bdbdbd" stroke-width="1.9" stroke-linejoin="round" stroke-linecap="round" /></svg>
<svg style="left:2503.2px;top:90.7px;" width="17.6" height="11" viewBox="0 0 17.6 11" fill="none"><path d="M2 2 L8.8 9 L15.6 2" stroke="#b0b0b0" stroke-width="1.9" stroke-linecap="round" stroke-linejoin="round"/></svg>
<svg style="left:2543px;top:80.5px;" width="30" height="28" viewBox="0 0 30 28" fill="none"><rect x="3.4" y="3.3" width="24" height="21.2" rx="2" stroke="#bdbdbd" stroke-width="2.3"/><path d="M14 3.3 V24.5" stroke="#bdbdbd" stroke-width="2.3"/></svg>
<div style="left:1096.3px;top:62px;width:445.6px;height:52.6px;background:#181818;border:1.2px solid #333333;border-radius:9px;box-shadow:0 2px 8px rgba(0,0,0,0.45);"></div>
<div style="left:1120.5px;top:79.2px;width:3.9px;height:3.7px;background:#7c7c7c;"></div>
<div style="left:1120.5px;top:86.8px;width:3.9px;height:3.7px;background:#7c7c7c;"></div>
<div style="left:1120.5px;top:94.3px;width:3.9px;height:3.7px;background:#7c7c7c;"></div>
<div style="left:1127.8px;top:79.2px;width:3.9px;height:3.7px;background:#7c7c7c;"></div>
<div style="left:1127.8px;top:86.8px;width:3.9px;height:3.7px;background:#7c7c7c;"></div>
<div style="left:1127.8px;top:94.3px;width:3.9px;height:3.7px;background:#7c7c7c;"></div>
<div style="left:1155.6px;top:79.2px;width:3.6px;height:18.7px;background:#8eb1f3;"></div>
<div style="left:1166.7px;top:79.2px;width:3.6px;height:18.7px;background:#8eb1f3;"></div>
<svg style="left:1195px;top:70px;" width="36" height="36" viewBox="0 0 36 36" fill="none"><path d="M6 17.6 C7.5 10 13 7 17.5 7 C22.5 7 26.5 10 28.6 14.6" stroke="#808080" stroke-width="3" stroke-linejoin="round" stroke-linecap="round" stroke-linecap="butt"/><path d="M28.9 6.5 V15.2 H20.3" stroke="#808080" stroke-width="3" stroke-linejoin="round" stroke-linecap="round" stroke-linecap="butt" stroke-linejoin="miter"/><circle cx="18.1" cy="26.1" r="4" fill="#808080"/></svg>
<svg style="left:1250px;top:70px;" width="28" height="36" viewBox="0 0 28 36" fill="none"><path d="M12.9 4.8 V20 M5 13.2 L12.9 21 L20.7 13.2" stroke="#808080" stroke-width="3" stroke-linejoin="round" stroke-linecap="round" stroke-linecap="butt" stroke-linejoin="miter"/><circle cx="12.9" cy="27.9" r="4" fill="#808080"/></svg>
<svg style="left:1300px;top:70px;" width="28" height="36" viewBox="0 0 28 36" fill="none"><path d="M12.5 21.5 V7 M4.7 14 L12.5 6.2 L20.3 14" stroke="#808080" stroke-width="3" stroke-linejoin="round" stroke-linecap="round" stroke-linecap="butt" stroke-linejoin="miter"/><circle cx="12.5" cy="27.9" r="4" fill="#808080"/></svg>
<svg style="left:1350px;top:70px;" width="24" height="36" viewBox="0 0 24 36" fill="none"><path d="M13.5 3.8 L2.9 21.8 L11 18.9 L9.5 32 L19.4 15 L11.7 17.3 Z" fill="#e9b03c"/></svg>
<svg style="left:1398px;top:73px;" width="32" height="32" viewBox="0 0 32 32" fill="none"><path d="M6.85 9.6 A10.3 10.3 0 1 1 5.96 19.6" stroke="#a0d090" stroke-width="3" stroke-linejoin="round" stroke-linecap="round" stroke-linecap="butt"/><path d="M4.6 4.7 V12.5 H11.5" stroke="#a0d090" stroke-width="3" stroke-linejoin="round" stroke-linecap="round" stroke-linecap="butt" stroke-linejoin="miter"/></svg>
<div style="left:1451.2px;top:77.4px;width:22.5px;height:22.3px;border:2.7px solid #e99a82;border-radius:2.5px;"></div>
<svg style="left:1498px;top:73.4px;" width="30" height="30" viewBox="0 0 30 30" fill="none"><path d="M5 10.5 V5 H10.5 M19 5 H24.5 V10.5 M24.5 19 V24.5 H19 M10.5 24.5 H5 V19" stroke="#b4d2f1" stroke-width="2.6" stroke-linejoin="round" stroke-linecap="round" stroke-linecap="butt" stroke-linejoin="miter"/><circle cx="12.9" cy="13" r="3.6" stroke="#b4d2f1" stroke-width="2.6"/><path d="M15.8 15.8 L20.6 20.5" stroke="#b4d2f1" stroke-width="2.8" stroke-linejoin="round" stroke-linecap="round" /></svg>
<span class="t" id="t71" style="left:611.3px;top:927.8px;line-height:28px;font-size:21.3px;color:#9c9c9c;letter-spacing:-0.507px;">PROBLEMAS</span>
<div style="left:747.8px;top:926.3px;width:31px;height:31px;background:#5a7ed6;border-radius:50%;"></div>
<span class="t" id="t72" style="left:758px;top:930.0px;line-height:24px;font-size:18.5px;color:#ffffff;letter-spacing:0.203px;">2</span>
<span class="t" id="t73" style="left:821.3px;top:927.8px;line-height:28px;font-size:21.3px;color:#e0e0e0;letter-spacing:-0.247px;">CONSOLA DE DEPURACIÓN</span>
<div style="left:817px;top:961.2px;width:290px;height:2.2px;background:#4a74c0;"></div>
<div style="left:1140.5px;top:939.8px;width:4px;height:4px;background:#c5c5c5;border-radius:50%;"></div>
<div style="left:1149.5px;top:939.8px;width:4px;height:4px;background:#c5c5c5;border-radius:50%;"></div>
<div style="left:1158.5px;top:939.8px;width:4px;height:4px;background:#c5c5c5;border-radius:50%;"></div>
<div style="left:1332.5px;top:919.5px;width:768.5px;height:45px;background:#2d2d2d;border-radius:3px;"></div>
<span class="t" id="t74" style="left:1346.6px;top:926.8px;line-height:31px;font-size:24.2px;color:#8c8c8c;letter-spacing:0.125px;">Filtro (por ejemplo, texto, excluir, escape)</span>
<svg style="left:2112px;top:925px;" width="32" height="34" viewBox="0 0 32 34" fill="none"><circle cx="19.4" cy="12.2" r="8.7" stroke="#bdbdbd" stroke-width="2.1"/><path d="M13.4 18.8 L3.2 30.6" stroke="#bdbdbd" stroke-width="2.1"/></svg>
<div style="left:2155.7px;top:924.2px;width:325px;height:35.6px;background:#2c2c2c;border:1.2px solid #3f3f3f;border-radius:7px;"></div>
<span class="t" id="t75" style="left:2172.5px;top:927.2px;line-height:30px;font-size:22.8px;color:#d0d0d0;letter-spacing:-0.236px;">Dart (Chrome)</span>
<svg style="left:2442.95px;top:936.3px;" width="22.5" height="13.4" viewBox="0 0 22.5 13.4" fill="none"><path d="M2 2 L11.25 11.4 L20.5 2" stroke="#c8c8c8" stroke-width="2.1" stroke-linecap="round" stroke-linejoin="round"/></svg>
<svg style="left:2492px;top:930px;" width="32" height="26" viewBox="0 0 32 26" fill="none"><path d="M2.5 4.3 H29.5 M2.5 12.5 H29.5 M2.5 20.7 H18.5" stroke="#c5c5c5" stroke-width="2.1"/><path d="M21.5 16.2 L28.7 23.4 M28.7 16.2 L21.5 23.4" stroke="#c5c5c5" stroke-width="2.1"/></svg>
<svg style="left:2544px;top:934px;" width="24" height="16" viewBox="0 0 24 16" fill="none"><path d="M2.6 11 L12 2.8 L21.4 11" stroke="#c5c5c5" stroke-width="2.1"/></svg>
<span class="t" id="t76" style="left:630.2px;top:974.8px;line-height:32px;font-size:24.5px;color:#c9b541;font-family:'Liberation Mono', monospace;letter-spacing:-0.852px;-webkit-text-stroke:0.55px;">Launching lib/main.dart on Chrome in debug mode...</span>
<span class="t" id="t77" style="left:630.2px;top:1007.5px;line-height:32px;font-size:24.5px;color:#c9b541;font-family:'Liberation Mono', monospace;letter-spacing:-0.852px;-webkit-text-stroke:0.55px;">This app is linked to the debug service: ws://127.0.0.1:50559/0dccmTuosRk=/ws</span>
<span class="t" id="t78" style="left:630.2px;top:1040.2px;line-height:32px;font-size:24.5px;color:#c9b541;font-family:'Liberation Mono', monospace;letter-spacing:-0.852px;-webkit-text-stroke:0.55px;">Debug service listening on ws://127.0.0.1:50559/0dccmTuosRk=/ws</span>
<span class="t" id="t79" style="left:630.2px;top:1072.9px;line-height:32px;font-size:24.5px;color:#6f97ec;font-family:'Liberation Mono', monospace;letter-spacing:-0.852px;-webkit-text-stroke:0.55px;">Connecting to VM Service at ws://127.0.0.1:50559/0dccmTuosRk=/ws</span>
<span class="t" id="t80" style="left:630.2px;top:1105.6px;line-height:32px;font-size:24.5px;color:#6f97ec;font-family:'Liberation Mono', monospace;letter-spacing:-0.852px;-webkit-text-stroke:0.55px;">Connected to the VM Service.</span>
<svg style="left:596px;top:1182px;" width="18" height="16" viewBox="0 0 18 16" fill="none"><path d="M2.5 2.5 L12.5 12.5 L8 17" stroke="#c5c5c5" stroke-width="2.2"/></svg>
<div style="left:1556px;top:171px;width:960px;height:725.5px;border-radius:20px 20px 21px 21px;background:#fdf7fe;box-shadow:0 8px 30px rgba(0,0,0,0.5),0 0 0 1px rgba(0,0,0,0.35);overflow:hidden;">
<div style="left:0px;top:0px;width:960px;height:92px;background:#dbe2fa;"></div>
<div style="left:39.700000000000045px;top:27.700000000000017px;width:23.4px;height:23.4px;background:#e16f5a;border-radius:50%;box-shadow:inset 0 0 0 0.6px rgba(0,0,0,0.12);"></div>
<div style="left:77.89999999999986px;top:27.700000000000017px;width:23.4px;height:23.4px;background:#efbe49;border-radius:50%;box-shadow:inset 0 0 0 0.6px rgba(0,0,0,0.12);"></div>
<div style="left:116.39999999999986px;top:27.700000000000017px;width:23.4px;height:23.4px;background:#72c04b;border-radius:50%;box-shadow:inset 0 0 0 0.6px rgba(0,0,0,0.12);"></div>
<svg style="left:154px;top:12px" width="492" height="65" viewBox="0 0 492 65" fill="none"><path d="M0 65 C12 65 22.4 56 22.4 44 V14 C22.4 6 28.4 0 36.4 0 H454.6 C462.6 0 468.6 6 468.6 14 V44 C468.6 56 479 65 491 65 Z" fill="#ffffff"/></svg>
<div style="left:0px;top:76.6px;width:960px;height:89.4px;background:#ffffff;border-radius:11px 11px 0 0;"></div>
<div style="left:0px;top:165.2px;width:960px;height:1.4px;background:#dddde0;"></div>
<svg style="left:198px;top:27.19999999999999px" width="17.6" height="21.8" viewBox="0 0 100 123.8"><path d="M19 81 L0 62 L62 0 H100 Z" fill="#8cc4f6"/><path d="M100 57 H62 L33.4 85.6 L52.4 104.7 Z" fill="#7fb6ef"/><path d="M52.4 123.8 H90.6 L52.4 85.6 L33.4 104.7 Z" fill="#23407f"/></svg>
<svg style="left:581px;top:29px" width="20" height="20" viewBox="0 0 20 20" fill="none"><path d="M3.4 3.2 L17.2 17 M17.2 3.2 L3.4 17" stroke="#1f1f1f" stroke-width="2.7"/></svg>
<svg style="left:648px;top:26px" width="24" height="24" viewBox="0 0 24 24" fill="none"><path d="M12.5 3 V21.9 M3 12.5 H21.9" stroke="#474747" stroke-width="2.6"/></svg>
<div style="left:895.3000000000002px;top:11.699999999999989px;width:52.4px;height:53.5px;background:#e9edfc;border-radius:15px;"></div>
<svg style="left:910px;top:30px" width="22" height="16" viewBox="0 0 22 16" fill="none"><path d="M3.8 4.3 L11.2 11.8 L18.6 4.3" stroke="#1f1f1f" stroke-width="3"/></svg>
<svg style="left:28px;top:108px" width="28" height="27" viewBox="0 0 28 27" fill="none"><path d="M3.2 13.3 H25 M13.4 3 L3.2 13.3 L13.4 23.6" stroke="#9b9b9b" stroke-width="2.6"/></svg>
<svg style="left:97px;top:108px" width="28" height="27" viewBox="0 0 28 27" fill="none"><path d="M3 13.3 H24.8 M14.6 3 L24.8 13.3 L14.6 23.6" stroke="#9b9b9b" stroke-width="2.6"/></svg>
<svg style="left:165px;top:107px" width="30" height="30" viewBox="0 0 30 30" fill="none"><path d="M23.6 9.2 A10 10 0 1 0 24.9 14.6" stroke="#474747" stroke-width="2.9" stroke-linecap="butt"/><path d="M25.6 3.4 V12.2 H16.8 Z" fill="#474747"/></svg>
<div style="left:231px;top:88.60000000000002px;width:567px;height:64.2px;background:#edf1fa;border-radius:32.1px;"></div>
<div style="left:240.79999999999995px;top:99.89999999999998px;width:43px;height:43px;background:#ffffff;border-radius:50%;"></div>
<svg style="left:248px;top:107px" width="30" height="30" viewBox="0 0 30 30" fill="none"><circle cx="14.4" cy="14.4" r="11" stroke="#222" stroke-width="2.7"/><path d="M14.4 13 V20.4" stroke="#222" stroke-width="2.8"/><circle cx="14.4" cy="9" r="1.7" fill="#222"/></svg>
<svg style="left:737px;top:105px" width="32" height="32" viewBox="0 0 32 32" fill="none"><path d="M15.6 3.6 L19.1 12 L28 12.7 L21.2 18.6 L23.3 27.4 L15.6 22.7 L7.9 27.4 L10 18.6 L3.2 12.7 L12.1 12 Z" stroke="#474747" stroke-width="2.5" stroke-linejoin="miter"/></svg>
<svg style="left:830px;top:102px" width="38" height="38" viewBox="0 0 38 38" fill="none"><circle cx="18.2" cy="18.6" r="13.8" stroke="#3b4bc4" stroke-width="2.8"/><circle cx="18.2" cy="14.8" r="4.1" stroke="#3b4bc4" stroke-width="2.7"/><path d="M8.2 27.6 C11.5 22.8 15.5 22.3 18.2 22.3 C20.9 22.3 24.9 22.8 28.2 27.6" stroke="#3b4bc4" stroke-width="2.7"/></svg>
<div style="left:914.1000000000004px;top:107.69999999999999px;width:6.4px;height:6.4px;background:#474747;border-radius:50%;"></div>
<div style="left:914.1000000000004px;top:118.0px;width:6.4px;height:6.4px;background:#474747;border-radius:50%;"></div>
<div style="left:914.1000000000004px;top:128.40000000000003px;width:6.4px;height:6.4px;background:#474747;border-radius:50%;"></div>
<div style="left:0;top:166.60000000000002px;width:960px;height:558.9px;overflow:hidden;"><div style="left:804.1999999999998px;top:33.499999999999964px;width:220px;height:23.2px;background:#a1493c;transform:rotate(45deg);box-shadow:0 0 9px 1px rgba(30,30,90,0.42);"><span class="t" style="left:0;width:220px;text-align:center;top:0;line-height:23.4px;font-size:18.4px;font-weight:700;color:#fff6ee;letter-spacing:-0.45px;">DEBUG</span></div></div>
<span class="t" id="t81" style="left:237.5999999999999px;top:23.3px;line-height:30px;font-size:23px;color:#1f1f1f;letter-spacing:0.879px;-webkit-text-stroke:0.1px;">Mi App simple</span>
<span class="t" id="t82" style="left:302.4000000000001px;top:102.8px;line-height:37px;font-size:28.6px;color:#1f1f1f;letter-spacing:0.311px;-webkit-text-stroke:0.1px;"><span style="color:#1f1f1f">localhost</span><span style="color:#5c5f66">:50523</span></span>
<span class="t" id="t83" style="left:203.20000000000005px;top:192.9px;line-height:54px;font-size:41.4px;color:#1d1b20;letter-spacing:0.746px;-webkit-text-stroke:0;">Mi App lo más simple posible</span>
<span class="t" id="t84" style="left:-1.7999999999999545px;top:277.7px;line-height:35px;font-size:26.6px;color:#1d1b20;letter-spacing:0.505px;-webkit-text-stroke:0;">¡Hola, mundo!</span>
</div>
</div></body></html>
